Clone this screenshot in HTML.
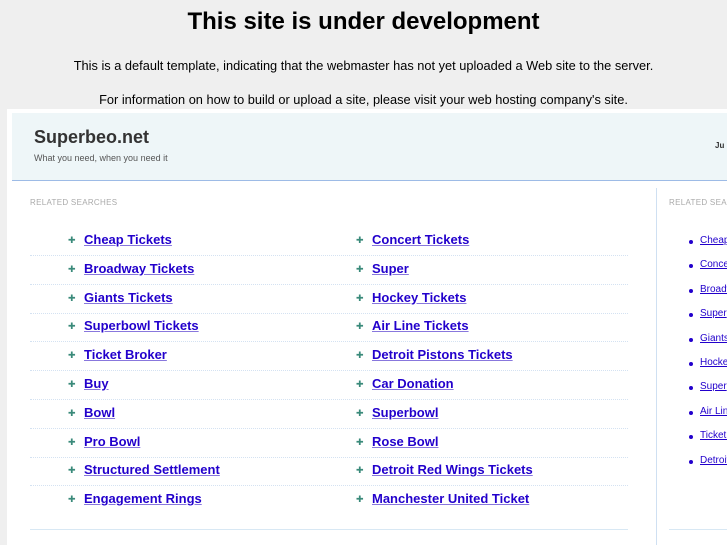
<!DOCTYPE html>
<html><head><style>
body{margin:0;width:727px;height:545px;overflow:hidden;background:#efefef;font-family:"Liberation Sans",sans-serif;position:relative}
.a{position:absolute;white-space:nowrap}
h1{position:absolute;left:0;width:727px;top:8px;margin:0;text-align:center;font-size:24px;color:#000}
.p{left:0;width:727px;text-align:center;font-size:12.8px;color:#000}
#frame{position:absolute;left:7px;top:109px;width:720px;height:436px;background:#fff}
#hdr{position:absolute;left:12px;top:113px;width:715px;height:67px;background:#eef6f8;border-bottom:1px solid #9dbbe6}
.lk{font-size:13px;font-weight:bold;color:#2200cc;text-decoration:underline;text-decoration-color:#8877dd}
.ar{font-size:9px;color:#3a8a7a}
.sep{position:absolute;left:30px;width:598px;border-top:1px dotted #d4e2f2;height:0}
.rl{font-size:10px;color:#2200cc;text-decoration:underline}
.bl{position:absolute;width:4px;height:4px;border-radius:2px;background:#2200cc}
.hd{font-size:8px;color:#aaa;letter-spacing:.3px}
#wrap{position:absolute;left:0;top:0;width:727px;height:545px;overflow:hidden}
</style></head><body>
<h1>This site is under development</h1>
<div class="a p" style="top:58px">This is a default template, indicating that the webmaster has not yet uploaded a Web site to the server.</div>
<div class="a p" style="top:92px">For information on how to build or upload a site, please visit your web hosting company's site.</div>
<div id="frame"></div>
<div id="hdr"></div>
<div id="wrap">
<div class="a" style="left:34px;top:127px;font-size:18px;font-weight:bold;color:#333">Superbeo.net</div>
<div class="a" style="left:34px;top:153px;font-size:9px;color:#555">What you need, when you need it</div>
<div class="a" style="left:715px;top:141px;font-size:8px;font-weight:bold;color:#333">Ju</div>
<div class="a hd" style="left:30px;top:198px">RELATED SEARCHES</div>
<div class="a hd" style="left:669px;top:198px">RELATED SEARCHES</div>
<div style="position:absolute;left:656px;top:188px;height:360px;border-left:1px solid #cfe0f2"></div>
<div style="position:absolute;left:30px;top:529px;width:598px;border-top:1px solid #d8e8f4"></div>
<div style="position:absolute;left:669px;top:529px;width:58px;border-top:1px solid #d8e8f4"></div>
<div id="rows"></div>
</div>
<script>
var L=["Cheap Tickets","Broadway Tickets","Giants Tickets","Superbowl Tickets","Ticket Broker","Buy","Bowl","Pro Bowl","Structured Settlement","Engagement Rings"];
var R=["Concert Tickets","Super","Hockey Tickets","Air Line Tickets","Detroit Pistons Tickets","Car Donation","Superbowl","Rose Bowl","Detroit Red Wings Tickets","Manchester United Ticket"];
var S=["Cheap Tickets","Concert Tickets","Broadway Tickets","Super","Giants Tickets","Hockey Tickets","Super","Air Line Tickets","Ticket Broker","Detroit Pistons"];
var h="";
for(var i=0;i<10;i++){var y=232+i*28.8;
h+='<div class="a ar" style="left:68px;top:'+(y+3)+'px">&#10010;</div><div class="a lk" style="left:84px;top:'+y+'px">'+L[i]+'</div>';
h+='<div class="a ar" style="left:356px;top:'+(y+3)+'px">&#10010;</div><div class="a lk" style="left:372px;top:'+y+'px">'+R[i]+'</div>';
if(i<9)h+='<div class="sep" style="top:'+(y+23)+'px"></div>';
var z=235+i*24.4;
h+='<div class="bl" style="left:689px;top:'+(z+5)+'px"></div><div class="a rl" style="left:700px;top:'+z+'px">'+S[i]+'</div>';}
document.getElementById("rows").innerHTML=h;
</script>
</body></html>
